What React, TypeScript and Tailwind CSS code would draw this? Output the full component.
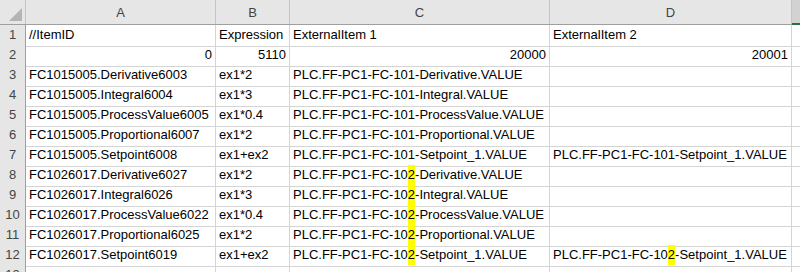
import React from 'react';

type Cell = { text: string; right?: boolean; hl?: boolean };

const COLS = ['A', 'B', 'C', 'D'];

const rows: Cell[][] = [
  [{ text: '//ItemID' }, { text: 'Expression' }, { text: 'ExternalItem 1' }, { text: 'ExternalItem 2' }],
  [{ text: '0', right: true }, { text: '5110', right: true }, { text: '20000', right: true }, { text: '20001', right: true }],
  [{ text: 'FC1015005.Derivative6003' }, { text: 'ex1*2' }, { text: 'PLC.FF-PC1-FC-101-Derivative.VALUE' }, { text: '' }],
  [{ text: 'FC1015005.Integral6004' }, { text: 'ex1*3' }, { text: 'PLC.FF-PC1-FC-101-Integral.VALUE' }, { text: '' }],
  [{ text: 'FC1015005.ProcessValue6005' }, { text: 'ex1*0.4' }, { text: 'PLC.FF-PC1-FC-101-ProcessValue.VALUE' }, { text: '' }],
  [{ text: 'FC1015005.Proportional6007' }, { text: 'ex1*2' }, { text: 'PLC.FF-PC1-FC-101-Proportional.VALUE' }, { text: '' }],
  [{ text: 'FC1015005.Setpoint6008' }, { text: 'ex1+ex2' }, { text: 'PLC.FF-PC1-FC-101-Setpoint_1.VALUE' }, { text: 'PLC.FF-PC1-FC-101-Setpoint_1.VALUE' }],
  [{ text: 'FC1026017.Derivative6027' }, { text: 'ex1*2' }, { text: 'PLC.FF-PC1-FC-102-Derivative.VALUE', hl: true }, { text: '' }],
  [{ text: 'FC1026017.Integral6026' }, { text: 'ex1*3' }, { text: 'PLC.FF-PC1-FC-102-Integral.VALUE', hl: true }, { text: '' }],
  [{ text: 'FC1026017.ProcessValue6022' }, { text: 'ex1*0.4' }, { text: 'PLC.FF-PC1-FC-102-ProcessValue.VALUE', hl: true }, { text: '' }],
  [{ text: 'FC1026017.Proportional6025' }, { text: 'ex1*2' }, { text: 'PLC.FF-PC1-FC-102-Proportional.VALUE', hl: true }, { text: '' }],
  [{ text: 'FC1026017.Setpoint6019' }, { text: 'ex1+ex2' }, { text: 'PLC.FF-PC1-FC-102-Setpoint_1.VALUE', hl: true }, { text: 'PLC.FF-PC1-FC-102-Setpoint_1.VALUE', hl: true }],
  [{ text: '' }, { text: '' }, { text: '' }, { text: '' }],
];

const grid = 'grid grid-cols-[26px_190px_74px_260px_242px_1fr]';

function CellText({ cell }: { cell: Cell }) {
  if (!cell.hl) return <>{cell.text}</>;
  // highlight the "2" of "102"
  const i = cell.text.indexOf('102') + 2;
  return (
    <>
      {cell.text.slice(0, i)}
      <span className="bg-[#ffff00]">{cell.text[i]}</span>
      {cell.text.slice(i + 1)}
    </>
  );
}

export default function App() {
  return (
    <div className="h-[272px] w-[800px] overflow-hidden bg-white font-['Liberation_Sans',sans-serif] text-[13px] text-black">
      {/* column header */}
      <div className={`${grid} h-[25px] border-b border-[#9f9f9f] bg-[#e6e6e6] text-[#444]`}>
        <div className="relative border-r border-[#c4c4c4]">
          <div className="absolute bottom-[3px] right-[3px] h-0 w-0 border-b-[13px] border-l-[13px] border-b-[#b4b4b4] border-l-transparent" />
        </div>
        {COLS.map((c) => (
          <div key={c} className="flex items-center justify-center border-r border-[#c4c4c4] pt-[2px]">
            {c}
          </div>
        ))}
        <div className="border-b-2 border-[#217346] bg-[#d2d2d2] -mb-px" />
      </div>
      {rows.map((r, ri) => (
        <div key={ri} className={`${grid} h-[20px]`}>
          <div className="flex items-end justify-center border-r border-b border-r-[#9f9f9f] border-b-[#c4c4c4] bg-[#e6e6e6] pb-[1px] text-[#444]">
            {ri + 1}
          </div>
          {r.map((cell, ci) => (
            <div
              key={ci}
              className={`flex items-end overflow-visible whitespace-nowrap border-r border-b border-[#d4d4d4] px-[3px] pb-[1px] ${
                cell.right ? 'justify-end' : ''
              }`}
            >
              <CellText cell={cell} />
            </div>
          ))}
          <div className="border-b border-[#d4d4d4]" />
        </div>
      ))}
    </div>
  );
}
